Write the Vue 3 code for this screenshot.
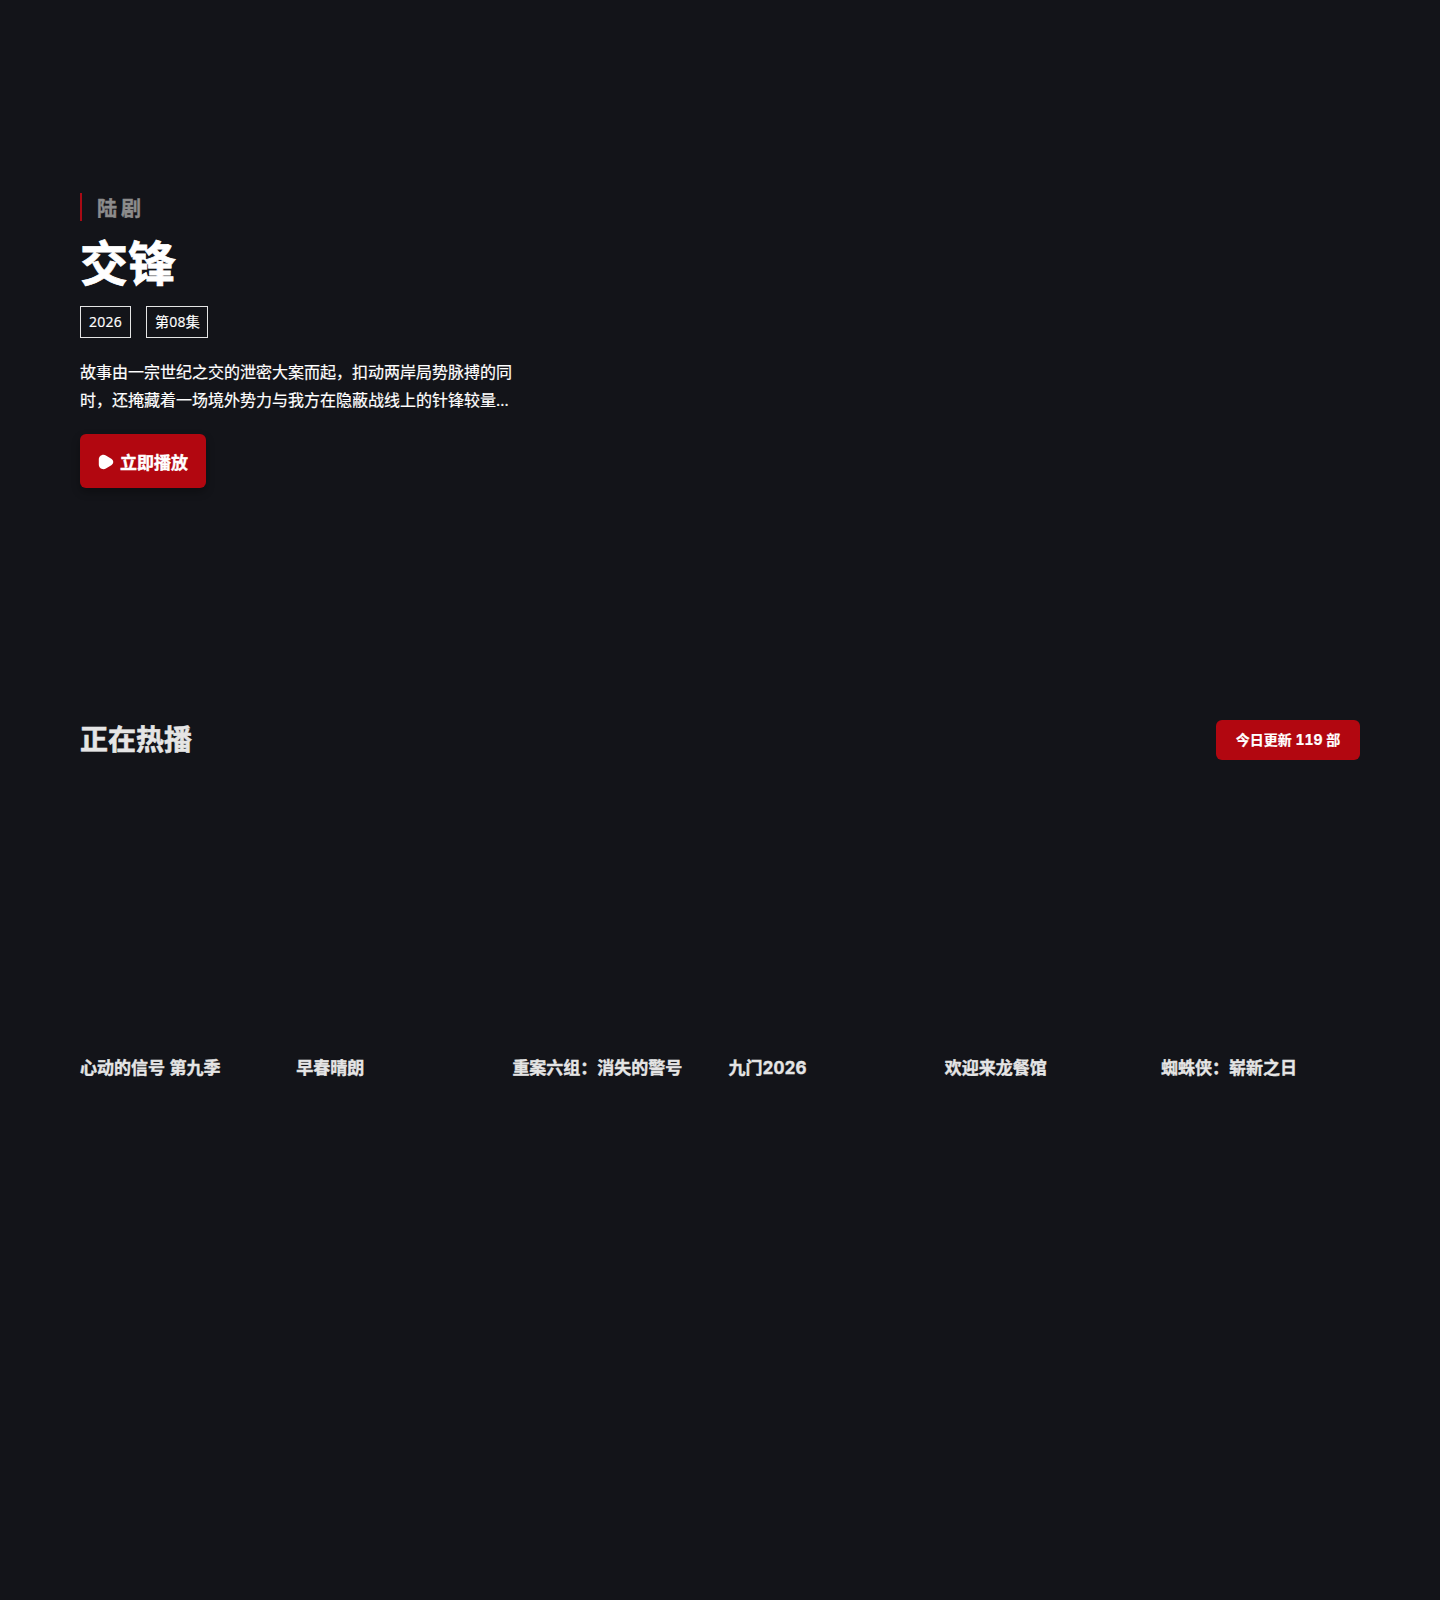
<script setup>
const cards = ['心动的信号 第九季', '早春晴朗', '重案六组：消失的警号', '九门2026', '欢迎来龙餐馆', '蜘蛛侠：崭新之日']
</script>

<template>
  <div class="page">
    <section class="hero">
      <div class="category">陆剧</div>
      <h1 class="title">交锋</h1>
      <div class="tags">
        <span class="tag">2026</span>
        <span class="tag">第08集</span>
      </div>
      <p class="desc">故事由一宗世纪之交的泄密大案而起，扣动两岸局势脉搏的同时，还掩藏着一场境外势力与我方在隐蔽战线上的针锋较量...</p>
      <button class="play">
        <svg class="play-icon" viewBox="0 0 16 16" width="16" height="16">
          <path d="M5.5 .8C2.8 .8 .8 3 .8 5.5v5c0 2.6 2 4.7 4.7 4.7 .9 0 1.7-.2 2.4-.7l5.4-3.2c2.6-1.6 2.6-4.9 0-6.5L7.900 1.500C7.200 1 6.400 .8 5.500 .8z" fill="#fff" />
        </svg>
        <span>立即播放</span>
      </button>
    </section>

    <section class="hot">
      <header class="hot-head">
        <h2 class="hot-title">正在热播</h2>
        <span class="pill">今日更新 119 部</span>
      </header>
      <div class="grid">
        <div v-for="c in cards" :key="c" class="card">
          <div class="poster"></div>
          <div class="card-title">{{ c }}</div>
        </div>
      </div>
    </section>
  </div>
</template>

<style scoped>
.page {
  height: 1600px;
  background: #131419;
  color: #fff;
  box-sizing: border-box;
  padding: 193px 80px 0;
  font-family: Inter, "Noto Sans CJK SC", sans-serif;
  font-variant-numeric: tabular-nums;
}
.hero { width: 440px; }
.category {
  border-left: 2px solid #a80a14;
  padding-left: 15px;
  height: 28px;
  line-height: 33px;
  font-size: 20px;
  font-weight: 700;
  letter-spacing: 4px;
  color: #8c8c8c;
  -webkit-text-stroke: .4px #8c8c8c;
}
.title {
  margin: 13px 0 0;
  font-size: 48px;
  line-height: 60px;
  font-weight: 700;
  color: #fff;
  -webkit-text-stroke: .8px #fff;
}
.tags { display: flex; gap: 15px; margin-top: 12px; }
.tag {
  border: 1px solid #e5e5e5;
  height: 32px;
  box-sizing: border-box;
  padding: 0 8px;
  line-height: 30px;
  font-family: "Open Sans", "Noto Sans CJK SC", sans-serif;
  font-size: 14px;
  letter-spacing: .25px;
  color: #fff;
  -webkit-text-stroke: .2px #fff;
}
.tag:last-child { padding-right: 7px; }
.desc {
  margin: 20px 0 0;
  font-family: "Open Sans", "Noto Sans CJK SC", sans-serif;
  font-size: 16px;
  line-height: 28px;
  color: #fff;
  -webkit-text-stroke: .2px #fff;
}
.play {
  margin-top: 20px;
  display: flex;
  align-items: center;
  gap: 6px;
  width: 126px;
  height: 54px;
  padding: 0 0 0 18px;
  border: 0;
  border-radius: 6px;
  background: #b20710;
  color: #fff;
  font-family: inherit;
  font-size: 17px;
  font-weight: 700;
  -webkit-text-stroke: .4px #fff;
  box-shadow: 0 4px 8px rgba(0, 0, 0, .3);
}
.play-icon { position: relative; top: .5px; }
.hot { margin-top: 232px; }
.hot-head {
  display: flex;
  justify-content: space-between;
  align-items: center;
  height: 40px;
}
.hot-title {
  margin: 0;
  font-size: 28px;
  line-height: 36px;
  font-weight: 700;
  color: #e5e5e5;
  -webkit-text-stroke: .6px #e5e5e5;
}
.pill {
  width: 144px;
  height: 40px;
  line-height: 40px;
  text-align: center;
  border-radius: 6px;
  background: #b20710;
  font-size: 14px;
  font-weight: 700;
  color: #fff;
  -webkit-text-stroke: .2px #fff;
}
.grid {
  display: grid;
  grid-template-columns: repeat(6, 200px);
  gap: 16.2px;
  margin-top: 32px;
}
.poster { height: 263px; }
.card-title {
  height: 26px;
  line-height: 26px;
  font-size: 17px;
  font-weight: 700;
  color: #e5e5e5;
  white-space: nowrap;
  -webkit-text-stroke: .4px #e5e5e5;
}
</style>

<style>
html, body { background: #131419; }
</style>
